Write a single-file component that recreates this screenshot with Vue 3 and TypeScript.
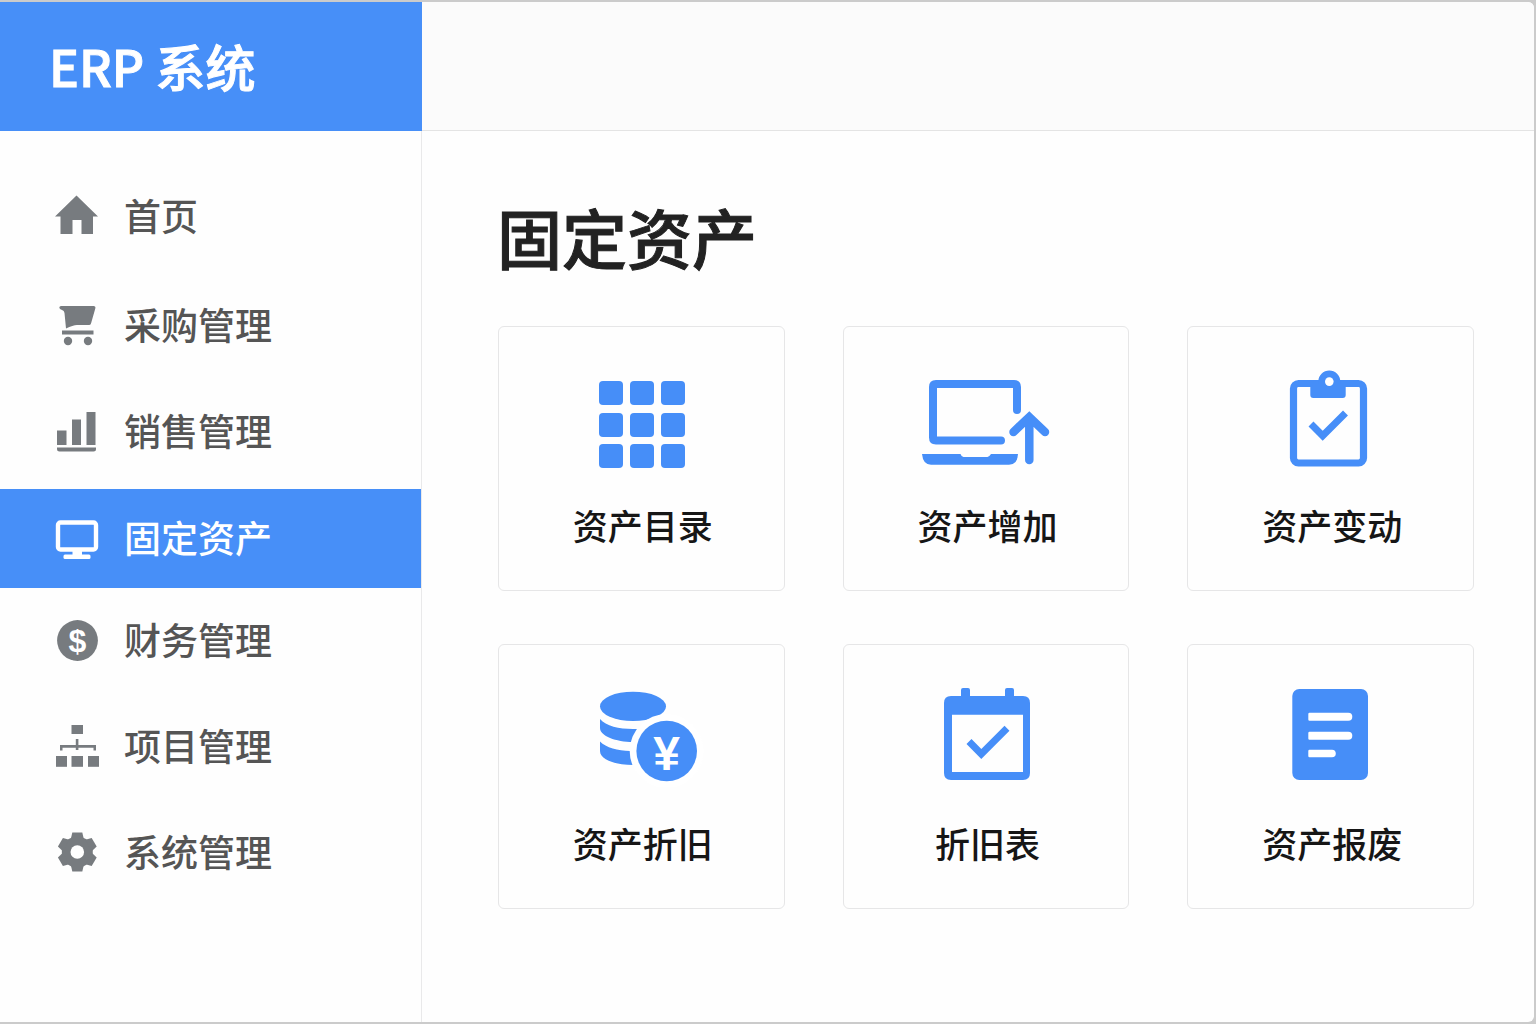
<script setup lang="ts">
type NavIcon = 'home' | 'cart' | 'bars' | 'monitor' | 'dollar' | 'tree' | 'gear'
type CardIcon = 'grid' | 'laptop' | 'clipboard' | 'coins' | 'calendar' | 'document'

interface NavItem {
  label: string
  icon: NavIcon
  active?: boolean
}

interface AssetCard {
  label: string
  icon: CardIcon
}

const navItems: NavItem[] = [
  { label: '首页', icon: 'home' },
  { label: '采购管理', icon: 'cart' },
  { label: '销售管理', icon: 'bars' },
  { label: '固定资产', icon: 'monitor', active: true },
  { label: '财务管理', icon: 'dollar' },
  { label: '项目管理', icon: 'tree' },
  { label: '系统管理', icon: 'gear' },
]

const cards: AssetCard[] = [
  { label: '资产目录', icon: 'grid' },
  { label: '资产增加', icon: 'laptop' },
  { label: '资产变动', icon: 'clipboard' },
  { label: '资产折旧', icon: 'coins' },
  { label: '折旧表', icon: 'calendar' },
  { label: '资产报废', icon: 'document' },
]

const gridColumns = [23, 54, 85]
const gridRows = [12, 44, 75]
</script>

<template>
  <div class="frame">
    <aside class="sidebar">
      <div class="brand">ERP 系统</div>
      <nav class="nav" aria-label="主菜单">
        <a
          v-for="item in navItems"
          :key="item.label"
          href="#"
          class="nav-item"
          :class="{ active: item.active }"
          :aria-current="item.active ? 'page' : undefined"
        >
          <svg class="nav-icon" viewBox="0 0 44 44" aria-hidden="true">
            <path
              v-if="item.icon === 'home'"
              fill="currentColor"
              d="M21.5 .5 43 21.5H38V39H26.500V25H17.500V39H5.500V21.500H0Z"
            />
            <g v-else-if="item.icon === 'cart'" fill="currentColor">
              <path d="M6 2H38.500Q41 2 40.300 4.500L36 19.500Q35.500 21 34 21H22Q18 21 11 24.500L9.500 9Q9.200 6.500 7 6Q4.300 5.200 4.300 3.500Q4.500 2 6 2Z" />
              <rect x="7" y="26.500" width="31.500" height="4" />
              <circle cx="13" cy="37" r="4.200" />
              <circle cx="33" cy="37" r="4.200" />
            </g>
            <g v-else-if="item.icon === 'bars'" fill="currentColor">
              <rect x="2" y="20.500" width="9.500" height="14.500" />
              <rect x="17" y="9.500" width="9" height="25.500" />
              <rect x="31.500" y="2" width="9" height="33" />
              <path d="M2 37.500H41V39Q41 41.500 38.500 41.500H4.500Q2 41.500 2 39Z" />
            </g>
            <g v-else-if="item.icon === 'monitor'">
              <rect x="3" y="5.500" width="38" height="27" rx="2.500" fill="none" stroke="currentColor" stroke-width="4.400" />
              <rect x="17.500" y="33" width="9.500" height="6" fill="currentColor" />
              <rect x="8.500" y="37.500" width="27" height="4.500" rx="1.500" fill="currentColor" />
            </g>
            <g v-else-if="item.icon === 'dollar'">
              <circle cx="22.500" cy="21.500" r="20.400" fill="currentColor" />
              <text class="coin-sign" x="22.500" y="32.500" font-size="32">$</text>
            </g>
            <g v-else-if="item.icon === 'tree'" fill="currentColor">
              <rect x="16.500" y="0" width="11.500" height="9" />
              <path d="M20.800 14H23.400V20H41V25.500H38.500V22.700H23.400V25H20.800V22.700H7.500V25.500H5V20H20.800Z" />
              <rect x="1" y="31" width="11" height="10.800" />
              <rect x="16.500" y="31" width="11.500" height="10.800" />
              <rect x="33" y="31" width="11" height="10.800" />
            </g>
            <g v-else fill="currentColor">
              <circle cx="22.300" cy="21" r="15.500" />
              <path
                v-for="angle in [0, 60, 120, 180, 240, 300]"
                :key="angle"
                d="M17.300 1.500H27.300L28.800 8H15.800Z"
                :transform="`rotate(${angle} 22.300 21)`"
              />
              <circle cx="22.300" cy="21" r="6.800" fill="#fff" />
            </g>
          </svg>
          <span class="nav-label">{{ item.label }}</span>
        </a>
      </nav>
    </aside>

    <div class="content">
      <header class="topbar"></header>
      <main class="main">
        <h1 class="title">固定资产</h1>
        <div class="cards">
          <a v-for="card in cards" :key="card.label" href="#" class="card">
            <svg class="card-icon" viewBox="0 0 130 100" aria-hidden="true">
              <g v-if="card.icon === 'grid'" fill="currentColor">
                <template v-for="y in gridRows" :key="y">
                  <rect v-for="x in gridColumns" :key="x" :x="x" :y="y" width="24" height="24" rx="4" />
                </template>
              </g>
              <g v-else-if="card.icon === 'laptop'">
                <path
                  d="M96 41V18Q96 15 93 15H15Q12 15 12 18V68.500Q12 71.500 15 71.500H80"
                  fill="none" stroke="currentColor" stroke-width="8" stroke-linecap="round"
                />
                <path d="M1 85H39.500Q40.500 88 42.500 88H66.500Q68 88 70 85H97Q96.500 95.700 88 95.700H10Q2 95.700 1 85Z" fill="currentColor" />
                <path d="M92.500 63 108.300 48 124 63M108.300 50V91" fill="none" stroke="currentColor" stroke-width="8.500" stroke-linecap="round" />
              </g>
              <g v-else-if="card.icon === 'clipboard'">
                <rect x="27.500" y="14.500" width="70" height="79.500" rx="5" fill="none" stroke="currentColor" stroke-width="7.200" />
                <path d="M44.300 15H52.300V12.500A11 11 0 0 1 74.300 12.500V15H79.700V26Q79.700 29 76.700 29H47.300Q44.300 29 44.300 26Z" fill="currentColor" />
                <circle cx="63.300" cy="12.600" r="4.300" fill="#fff" />
                <path d="M45 55 56.700 66.700 79.500 44" fill="none" stroke="currentColor" stroke-width="7" />
              </g>
              <g v-else-if="card.icon === 'coins'">
                <ellipse cx="57" cy="19.400" rx="33" ry="14.700" fill="currentColor" />
                <path d="M24 32C30 39 43 42 57 42H66V55H57C40 55 24 49 24 41Z" fill="currentColor" />
                <path d="M24 54.500C30 60.500 42 64 54 64H64V78H57C40 78 24 73 24 64Z" fill="currentColor" />
                <circle cx="90.700" cy="64" r="37" fill="#fff" />
                <circle cx="90.700" cy="64" r="30.300" fill="currentColor" />
                <text class="coin-sign" x="90.500" y="83" font-size="48">¥</text>
              </g>
              <g v-else-if="card.icon === 'calendar'">
                <path
                  d="M30 9H40V3Q40 1 42 1H47Q49 1 49 3V9H84V3Q84 1 86 1H91Q93 1 93 3V9H102Q109 9 109 16V86Q109 93 102 93H30Q23 93 23 86V16Q23 9 30 9ZM31 27.700V85H102V27.700Z"
                  fill="currentColor" fill-rule="evenodd"
                />
                <path d="M48 54.500 60.300 67 86 41.300" fill="none" stroke="currentColor" stroke-width="7" />
              </g>
              <g v-else>
                <rect x="26.300" y="2" width="75.700" height="91" rx="7" fill="currentColor" />
                <g fill="#fff">
                  <path d="M43.500 25.700H82.300A4 4 0 0 1 82.300 33.700H43.500Q42.300 33.700 42.300 32.500V27Q42.300 25.700 43.500 25.700Z" />
                  <path d="M43.500 44.700H82.300A4 4 0 0 1 82.300 52.700H43.500Q42.300 52.700 42.300 51.500V46Q42.300 44.700 43.500 44.700Z" />
                  <path d="M43.500 62.700H66A3.800 3.800 0 0 1 66 70.300H43.500Q42.300 70.300 42.300 69V64Q42.300 62.700 43.500 62.700Z" />
                </g>
              </g>
            </svg>
            <span class="card-label">{{ card.label }}</span>
          </a>
        </div>
      </main>
    </div>
  </div>
</template>

<style>
body {
  margin: 0;
  background: #cbcbcb;
}
</style>

<style scoped>
.frame {
  display: flex;
  min-height: 100vh;
  box-sizing: border-box;
  border: 2px solid #cbcbcb;
  border-left: 0;
  border-radius: 0 8px 8px 0;
  background: #fefefe;
  overflow: hidden;
  font-family: "Noto Sans CJK SC", "Noto Sans", sans-serif;
}

.sidebar {
  flex: none;
  width: 422px;
  box-sizing: border-box;
  border-right: 1px solid #e9e9ea;
}

.brand {
  display: flex;
  align-items: center;
  height: 129px;
  box-sizing: border-box;
  margin-right: -1px;
  padding: 0 49px 3px;
  background: #478ff8;
  color: #fff;
  font-size: 50px;
  font-weight: 500;
  line-height: 64px;
  -webkit-text-stroke: 1px currentColor;
}

.nav {
  display: flex;
  flex-direction: column;
  padding-top: 33px;
}

.nav-item {
  display: flex;
  align-items: center;
  gap: 25px;
  height: 106px;
  padding-left: 55px;
  color: #555;
  font-size: 37px;
  font-weight: 500;
  line-height: 48px;
  text-decoration: none;
}

.nav-item:first-child {
  margin-bottom: 3px;
}

.nav-item.active {
  height: 99px;
  margin-top: 4px;
  background: #478ff8;
  color: #fff;
}

.nav-icon {
  flex: none;
  width: 44px;
  height: 44px;
  color: #777b7f;
}

.nav-label {
  padding-bottom: 4px;
}

.active .nav-icon {
  color: #fff;
}

.coin-sign {
  fill: #fff;
  font-family: "Liberation Sans", sans-serif;
  font-weight: 700;
  text-anchor: middle;
}

.content {
  flex: 1;
  min-width: 0;
}

.topbar {
  height: 129px;
  box-sizing: border-box;
  border-bottom: 1px solid #e4e4e4;
  background: #fbfbfb;
}

.main {
  padding: 57px 60px 60px 75px;
}

.title {
  margin: 0;
  color: #222;
  font-size: 65px;
  font-weight: 500;
  line-height: 96px;
  -webkit-text-stroke: 1px currentColor;
}

.cards {
  display: grid;
  grid-template-columns: repeat(3, 1fr);
  gap: 53px 58px;
  margin: 42px 0 0 1px;
}

.card {
  display: flex;
  flex-direction: column;
  align-items: center;
  gap: 30px;
  height: 265px;
  box-sizing: border-box;
  padding-top: 42px;
  border: 1px solid #e6e6e7;
  border-radius: 6px;
  color: #161616;
  text-decoration: none;
}

.card-icon {
  flex: none;
  width: 130px;
  height: 100px;
  color: #468ef8;
}

.card-label {
  padding-left: 3px;
  font-size: 35px;
  font-weight: 500;
  line-height: 52px;
}
</style>
